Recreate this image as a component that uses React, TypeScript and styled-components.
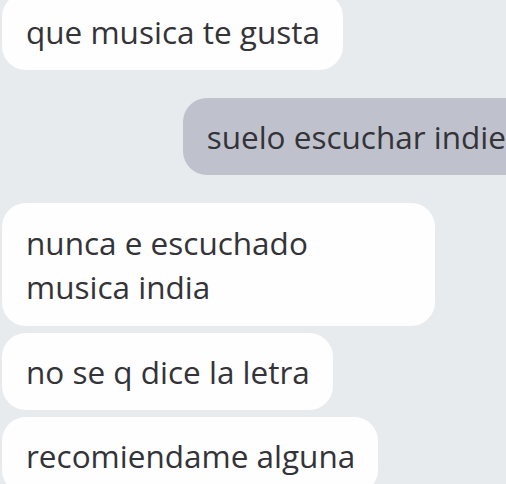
import React from "react";
import styled, { createGlobalStyle } from "styled-components";

const Global = createGlobalStyle`
  html, body {
    margin: 0;
    padding: 0;
    background: #e8ebee;
    overflow: hidden;
  }
`;

const Chat = styled.div`
  width: 527px;
  padding: 0 2px;
  margin-top: -7px;
  display: flex;
  flex-direction: column;
  font-family: "Open Sans", "Noto Sans", sans-serif;
  font-size: 31.5px;
  font-weight: 500;
  color: #333338;
`;

const Group = styled.div<{ $mine?: boolean }>`
  display: flex;
  flex-direction: column;
  align-items: ${(p) => (p.$mine ? "flex-end" : "flex-start")};
  gap: 7px;
  margin-bottom: 28px;
`;

const Bubble = styled.div<{ $mine?: boolean; $wide?: boolean }>`
  box-sizing: border-box;
  max-width: 433px;
  padding: 17px 23px 16px 24px;
  ${(p) => (p.$wide ? "width: 433px; padding-top: 18px; padding-bottom: 17px;" : "")}
  line-height: 44px;
  border-radius: 24px;
  white-space: nowrap;
  background: ${(p) => (p.$mine ? "#bfc2cc" : "#fefefe")};
`;

export default function App() {
  return (
    <>
      <Global />
      <Chat>
        <Group>
          <Bubble>que musica te gusta</Bubble>
        </Group>
        <Group $mine>
          <Bubble $mine>suelo escuchar indie</Bubble>
        </Group>
        <Group>
          <Bubble $wide>
            nunca e escuchado
            <br />
            musica india
          </Bubble>
          <Bubble>no se q dice la letra</Bubble>
          <Bubble>recomiendame alguna</Bubble>
        </Group>
      </Chat>
    </>
  );
}
